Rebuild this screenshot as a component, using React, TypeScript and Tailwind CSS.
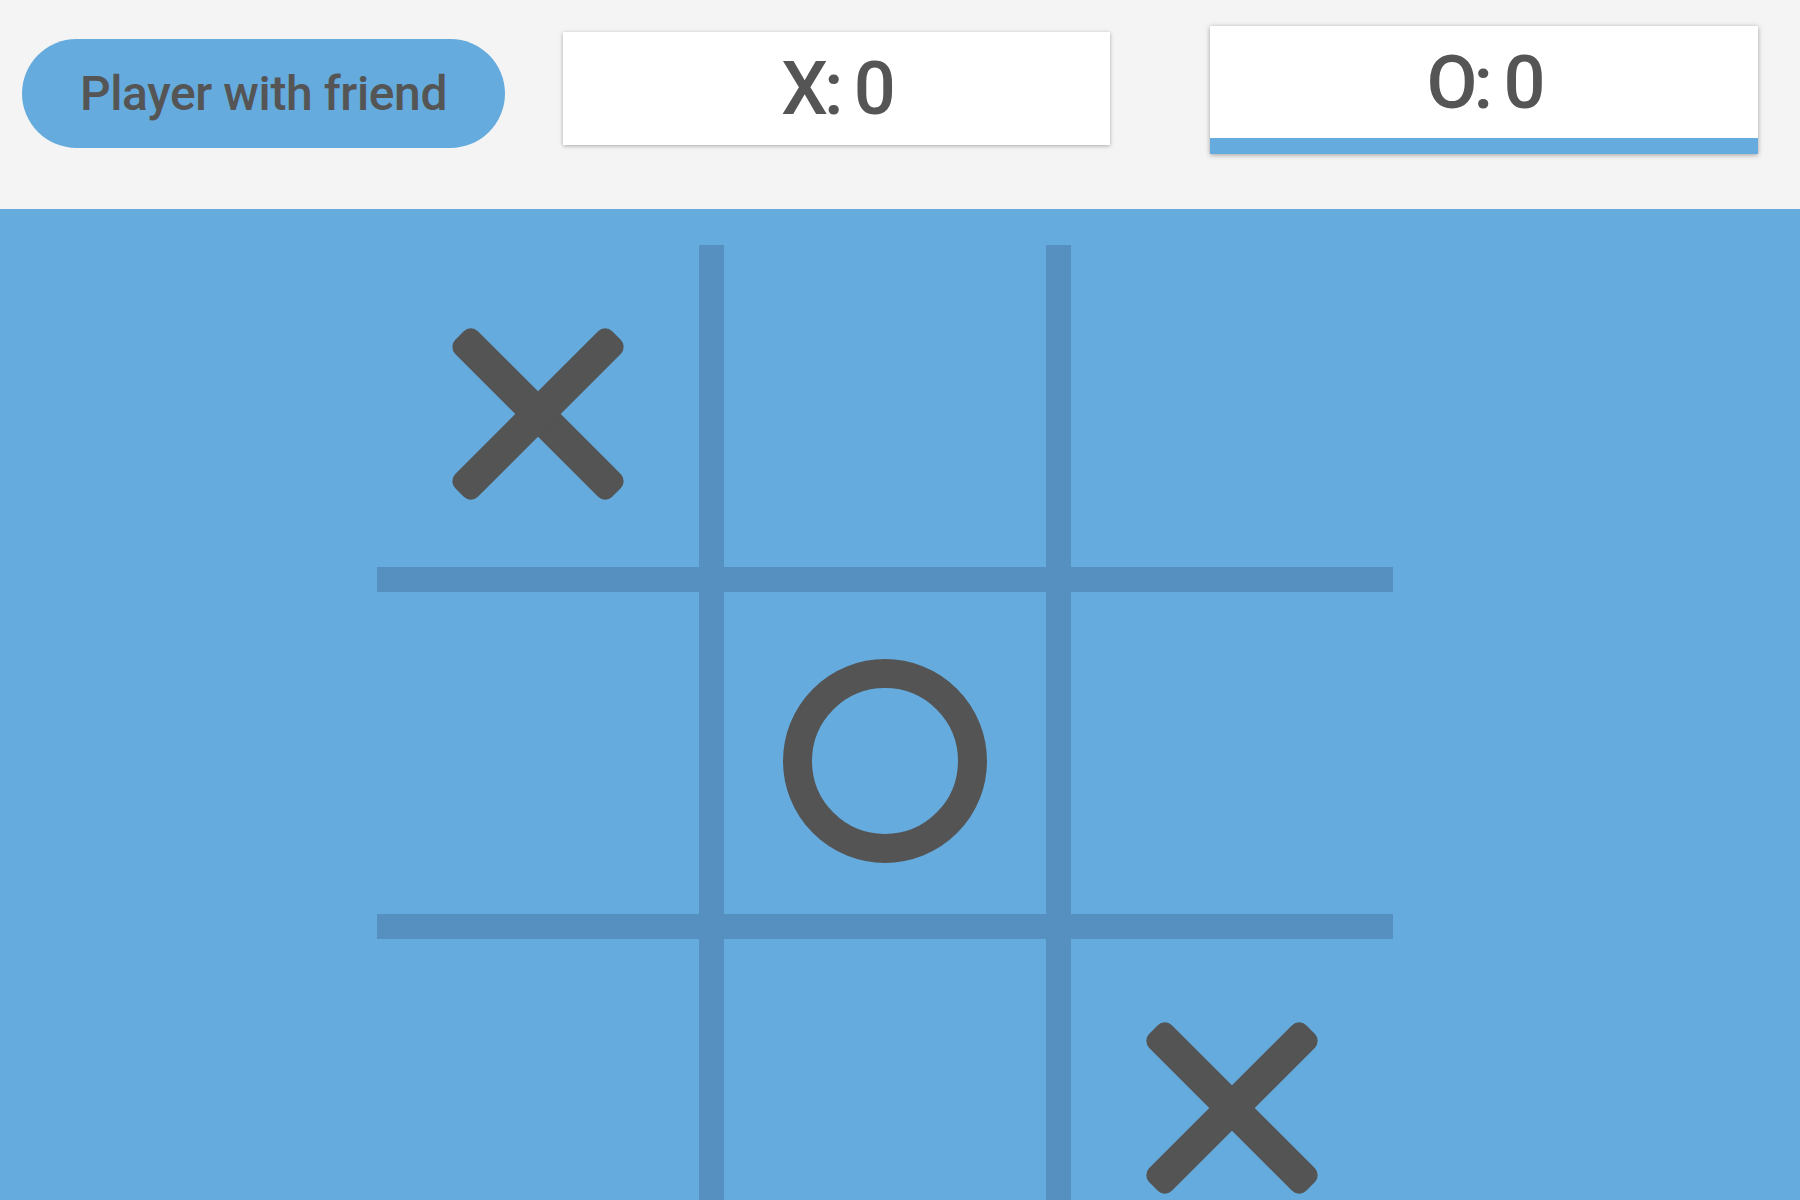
import React from "react";

type Mark = "X" | "O" | null;

const board: Mark[] = ["X", null, null, null, "O", null, null, null, "X"];

function XMark() {
  return (
    <svg width="172" height="172" viewBox="0 0 172 172">
      <rect x="-25" y="70" width="222" height="32" rx="10" fill="#545454" transform="rotate(45 86 86)" />
      <rect x="-25" y="70" width="222" height="32" rx="10" fill="#545454" transform="rotate(-45 86 86)" />
    </svg>
  );
}

function OMark() {
  return (
    <svg width="204" height="204" viewBox="0 0 204 204">
      <circle cx="102" cy="102" r="87.5" fill="none" stroke="#545454" strokeWidth="29" />
    </svg>
  );
}

export default function App() {
  return (
    <div className="min-h-screen w-full bg-[#65abdd] overflow-hidden font-['Roboto',sans-serif]">
      {/* Header */}
      <div className="h-[209px] bg-[#f4f4f4] flex items-start">
        <button className="ml-[22px] mt-[39px] w-[483px] h-[109px] shrink-0 rounded-full bg-[#65abdd] text-[#555] text-[48px] font-medium tracking-[-0.4px] flex items-center justify-center">
          Player with friend
        </button>
        <div className="ml-[58px] mt-[32px] w-[547px] h-[113px] shrink-0 bg-white shadow-[0_1px_4px_rgba(0,0,0,0.3)] flex items-center justify-center text-[#555] text-[74px] font-medium tracking-[-4px]">
          X: 0
        </div>
        <div className="ml-[100px] mt-[26px] w-[548px] h-[128px] shrink-0 bg-white border-b-[16px] border-[#65abdd] shadow-[0_1px_5px_rgba(0,0,0,0.35)] flex items-center justify-center text-[#555] text-[74px] font-medium tracking-[-4px]">
          O: 0
        </div>
      </div>

      {/* Board */}
      <div className="pt-[36px] pl-[377px]">
        <div className="grid grid-cols-[322px_322px_322px] grid-rows-[322px_322px_322px] gap-[25px] bg-[#5590c0] w-[1016px]">
          {board.map((cell, i) => (
            <div key={i} className="bg-[#65abdd] flex items-center justify-center pt-[16px]">
              {cell === "X" && <XMark />}
              {cell === "O" && <OMark />}
            </div>
          ))}
        </div>
      </div>
    </div>
  );
}
